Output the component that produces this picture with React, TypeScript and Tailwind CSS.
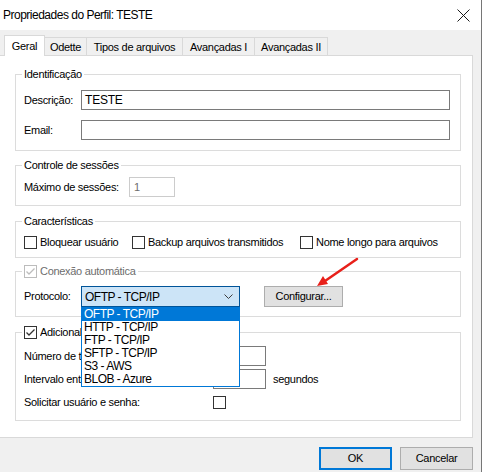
import React from "react";

function Check({ checked = false, disabled = false }: { checked?: boolean; disabled?: boolean }) {
  const c = disabled ? "#bcbcbc" : "#333333";
  return (
    <span
      className={`inline-flex w-[13px] h-[13px] shrink-0 border bg-white ${disabled ? "border-[#bcbcbc]" : "border-[#333333]"}`}
    >
      {checked && (
        <svg width="11" height="11" viewBox="0 0 11 11">
          <polyline points="1.5,5.5 4,8 9.5,2.5" fill="none" stroke={c} strokeWidth="1.3" />
        </svg>
      )}
    </span>
  );
}

function Tab({ label, w, active = false }: { label: string; w: string; active?: boolean }) {
  if (active) {
    return (
      <div
        className={`${w} h-[21px] -mb-px relative z-10 bg-white border-l border-t border-r border-[#d9d9d9] flex items-center justify-center`}
      >
        {label}
      </div>
    );
  }
  return (
    <div className={`${w} h-[18px] border-t border-r border-[#d9d9d9] flex items-center justify-center pt-[1px]`}>
      {label}
    </div>
  );
}

const items = ["OFTP - TCP/IP", "HTTP - TCP/IP", "FTP - TCP/IP", "SFTP - TCP/IP", "S3 - AWS", "BLOB - Azure"];

export default function App() {
  return (
    <div className="w-[482px] h-[472px] bg-[#f0f0f0] border-r border-[#767676] overflow-hidden relative flex flex-col text-[11px] tracking-[-0.3px] text-black font-['Liberation_Sans',Arial,sans-serif]">
      {/* title bar */}
      <div className="h-[30px] shrink-0 bg-white flex items-center justify-between pl-[3px] pr-[11px]">
        <span className="text-[12px] tracking-[-0.5px]">Propriedades do Perfil: TESTE</span>
        <svg width="13" height="13" viewBox="0 0 13 13">
          <path d="M0.5 0.5 L12.5 12.5 M12.5 0.5 L0.5 12.5" stroke="#1a1a1a" strokeWidth="1" />
        </svg>
      </div>

      {/* tabs */}
      <div className="h-[25px] shrink-0 flex items-end pl-[4px]">
        <Tab label="Geral" w="w-[41px]" active />
        <Tab label="Odette" w="w-[42px]" />
        <Tab label="Tipos de arquivos" w="w-[96px]" />
        <Tab label="Avançadas I" w="w-[72px]" />
        <Tab label="Avançadas II" w="w-[73px]" />
      </div>

      {/* panel */}
      <div className="w-[473px] h-[383px] shrink-0 bg-white border-t border-r border-b border-[#d9d9d9] pl-[15px] pt-[11px]">
        {/* Identificação */}
        <fieldset className="w-[446px] border border-[#dcdcdc] pl-[8px] pr-[10px] pt-[9px] pb-[10px]">
          <legend className="-ml-[2px] px-[2px] leading-[14px]">Identificação</legend>
          <div className="flex items-center h-[20px]">
            <span className="w-[57px] shrink-0">Descrição:</span>
            <div className="flex-1 h-[20px] border border-[#7a7a7a] flex items-center pl-[3px] text-[12px] tracking-[-0.2px]">
              TESTE
            </div>
          </div>
          <div className="flex items-center h-[20px] mt-[10px]">
            <span className="w-[57px] shrink-0">Email:</span>
            <div className="flex-1 h-[20px] border border-[#7a7a7a]" />
          </div>
        </fieldset>

        {/* Controle de sessões */}
        <fieldset className="w-[446px] mt-[7px] border border-[#dcdcdc] pl-[8px] pr-[10px] pt-[5px] pb-[8px]">
          <legend className="-ml-[2px] px-[2px] leading-[14px]">Controle de sessões</legend>
          <div className="flex items-center h-[20px]">
            <span className="w-[105px] shrink-0">Máximo de sessões:</span>
            <div className="w-[46px] h-[20px] border border-[#cccccc] flex items-center pl-[4px] text-[#6d6d6d]">1</div>
          </div>
        </fieldset>

        {/* Características */}
        <fieldset className="w-[446px] mt-[8px] border border-[#dcdcdc] pl-[8px] pr-[10px] pt-[7px] pb-[7px]">
          <legend className="-ml-[2px] px-[2px] leading-[14px]">Características</legend>
          <div className="flex items-center h-[15px]">
            <div className="w-[108px] flex items-center gap-[3px]">
              <Check />
              <span>Bloquear usuário</span>
            </div>
            <div className="w-[168px] flex items-center gap-[3px]">
              <Check />
              <span>Backup arquivos transmitidos</span>
            </div>
            <div className="flex items-center gap-[3px]">
              <Check />
              <span>Nome longo para arquivos</span>
            </div>
          </div>
        </fieldset>

        {/* Conexão automática */}
        <fieldset className="w-[446px] mt-[6px] border border-[#dcdcdc] pl-[8px] pr-[10px] pt-[8px] pb-[9px]">
          <legend className="-ml-[2px] px-[2px] leading-[14px] flex items-center gap-[3px] text-[#6d6d6d]">
            <Check checked disabled />
            <span>Conexão automática</span>
          </legend>
          <div className="flex items-center h-[21px]">
            <span className="w-[57px] shrink-0">Protocolo:</span>
            <div className="relative w-[159px] h-[21px]">
              <div className="w-full h-full bg-[#cce4f7] border border-[#005499] flex items-center justify-between pl-[3px] pr-[6px] text-[12px] tracking-[-0.5px]">
                <span>OFTP - TCP/IP</span>
                <svg width="9" height="5" viewBox="0 0 9 5">
                  <polyline points="0.5,0.5 4.5,4.5 8.5,0.5" fill="none" stroke="#3c3c3c" strokeWidth="1" />
                </svg>
              </div>
              <div className="absolute left-0 top-full z-20 w-[159px] bg-white border border-[#0078d7] text-[12px] tracking-[-0.5px]">
                {items.map((it, i) => (
                  <div
                    key={it}
                    className={`h-[13px] leading-[13px] pl-[2px] ${i === 0 ? "bg-[#0078d7] text-white" : "text-black"}`}
                  >
                    {it}
                  </div>
                ))}
              </div>
            </div>
            <div className="ml-[24px] w-[79px] h-[21px] bg-[#e1e1e1] border border-[#adadad] flex items-center justify-center">
              Configurar...
            </div>
          </div>
        </fieldset>

        {/* Adicional (partly hidden under the open drop-down list) */}
        <fieldset className="w-[446px] mt-[8px] border border-[#dcdcdc] pl-[8px] pr-[10px] pt-[7px] pb-[10px]">
          <legend className="-ml-[2px] px-[2px] leading-[14px] flex items-center gap-[3px] w-[160px]">
            <Check checked />
            <span className="w-[41px] overflow-hidden whitespace-nowrap">Adicional</span>
          </legend>
          <div className="flex items-center h-[20px]">
            <span className="w-[57px] shrink-0 overflow-hidden whitespace-nowrap">Número de tentativas:</span>
            <span className="w-[132px] shrink-0" />
            <div className="w-[53px] h-[20px] border border-[#7a7a7a]" />
          </div>
          <div className="flex items-center h-[20px] mt-[3px]">
            <span className="w-[57px] shrink-0 overflow-hidden whitespace-nowrap">Intervalo entre tentativas:</span>
            <span className="w-[132px] shrink-0" />
            <div className="w-[53px] h-[20px] border border-[#7a7a7a]" />
            <span className="ml-[7px]">segundos</span>
          </div>
          <div className="flex items-center h-[15px] mt-[6px]">
            <span className="w-[189px] shrink-0">Solicitar usuário e senha:</span>
            <Check />
          </div>
        </fieldset>
      </div>

      {/* footer */}
      <div className="flex justify-end gap-[8px] pr-[8px] pt-[9px]">
        <div className="w-[73px] h-[23px] bg-[#e1e1e1] border-2 border-[#0078d7] flex items-center justify-center">OK</div>
        <div className="w-[73px] h-[23px] bg-[#e1e1e1] border border-[#adadad] flex items-center justify-center">Cancelar</div>
      </div>

      {/* red annotation arrow */}
      <svg className="absolute left-0 top-0 pointer-events-none" width="482" height="472" viewBox="0 0 482 472">
        <line x1="357" y1="259" x2="325" y2="281" stroke="#e8201a" strokeWidth="2.5" strokeLinecap="round" />
        <polygon points="317,286 328,284 323,276" fill="#e8201a" />
      </svg>
    </div>
  );
}
